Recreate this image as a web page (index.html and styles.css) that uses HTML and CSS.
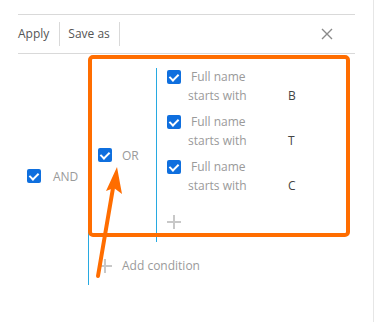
FILE: index.html
```html
<!DOCTYPE html>
<html lang="en">
<head>
  <meta charset="UTF-8">
  <meta name="viewport" content="width=device-width, initial-scale=1.0">
  <title>Filter</title>
  <link rel="stylesheet" href="styles.css">
</head>
<body>

  <div class="panel">
    <div class="toolbar">
      <span class="toolButton">Apply</span>
      <span class="toolButton">Save as</span>
      <span class="closeButton">
        <svg width="12" height="12" viewBox="0 0 12 12"><path d="M1 1 L11 11 M11 1 L1 11" stroke="#8a8a8a" stroke-width="1.4" fill="none"/></svg>
      </span>
    </div>

    <div class="tree">
      <div class="group">
        <span class="check"></span>
        <span class="groupLabel">AND</span>
      </div>

      <div class="branch">
        <div class="orGroup">
          <div class="group">
            <span class="check"></span>
            <span class="groupLabel">OR</span>
          </div>
          <div class="conditions">
            <div class="condition">
              <div class="conditionTop"><span class="check"></span><span class="field">Full name</span></div>
              <div class="conditionBottom"><span class="operator">starts with</span><span class="value">B</span></div>
            </div>
            <div class="condition">
              <div class="conditionTop"><span class="check"></span><span class="field">Full name</span></div>
              <div class="conditionBottom"><span class="operator">starts with</span><span class="value">T</span></div>
            </div>
            <div class="condition">
              <div class="conditionTop"><span class="check"></span><span class="field">Full name</span></div>
              <div class="conditionBottom"><span class="operator">starts with</span><span class="value">C</span></div>
            </div>
            <div class="plus"></div>
          </div>
        </div>

        <div class="addRow">
          <span class="plus"></span>
          <span class="addLabel">Add condition</span>
        </div>
      </div>
    </div>
  </div>

  <!-- annotation -->
  <div class="highlight"></div>
  <svg class="arrow" width="380" height="322" viewBox="0 0 380 322">
    <line x1="98" y1="276" x2="113" y2="188" stroke="#ff6d00" stroke-width="4" stroke-linecap="round"/>
    <polygon points="117,167 122,194 114,188 106,191" fill="#ff6d00"/>
  </svg>

</body>
</html>
```

FILE: styles.css
```css
body {
  margin: 0;
  font-family: "Open Sans", Arial, sans-serif;
  font-size: 12px;
  background: #fff;
  height: 322px;
  border-right: 1px solid #e6e6e6;
  width: 373px;
  position: relative;
  overflow: hidden;
}

.panel {
  margin-left: 18px;
  padding-top: 14px;
}

.toolbar {
  width: 337px;
  height: 38px;
  border-top: 1px solid #d9d9d9;
  border-bottom: 1px solid #d9d9d9;
  display: flex;
  align-items: center;
}

.toolButton {
  color: #555;
  font-size: 12px;
  line-height: 24px;
  padding-right: 10px;
  border-right: 1px solid #d9d9d9;
}

.toolButton + .toolButton {
  padding-left: 8px;
  padding-right: 9px;
}

.closeButton {
  margin-left: auto;
  margin-right: 22px;
  display: flex;
}

.tree {
  display: flex;
  align-items: center;
  margin-top: 13px;
  margin-left: 9px;
}

.group {
  display: flex;
  align-items: center;
}

.check {
  width: 14px;
  height: 14px;
  border-radius: 2px;
  background: #0f6fde;
  position: relative;
  flex-shrink: 0;
}

.check::after {
  content: "";
  position: absolute;
  left: 4px;
  top: 2px;
  width: 4px;
  height: 7px;
  border-right: 2px solid #fff;
  border-bottom: 2px solid #fff;
  transform: rotate(45deg);
}

.groupLabel {
  color: #9a9a9a;
  margin-left: 12px;
}

.tree > .group .groupLabel {
  width: 35px;
}

.branch {
  border-left: 1px solid #27a9e1;
  padding-left: 9px;
  padding-bottom: 12px;
}

.orGroup {
  display: flex;
  align-items: center;
  padding-top: 1px;
}

.orGroup .groupLabel {
  margin-left: 10px;
  width: 34px;
}

.conditions {
  border-left: 1px solid #27a9e1;
  padding-left: 10px;
  padding-bottom: 13px;
  width: 170px;
}

.condition {
  padding-top: 2px;
  margin-bottom: 8px;
}

.conditionTop {
  display: flex;
  align-items: center;
  height: 14px;
}

.field {
  color: #9a9a9a;
  margin-left: 10px;
  line-height: 14px;
}

.conditionBottom {
  margin-top: 2px;
  line-height: 19px;
  padding-left: 21px;
  display: flex;
}

.operator {
  color: #9a9a9a;
  width: 100px;
}

.value {
  color: #444;
}

.plus {
  width: 14px;
  height: 14px;
  position: relative;
  margin-top: 20px;
  flex-shrink: 0;
}

.plus::before, .plus::after {
  content: "";
  position: absolute;
  background: #c8c8c8;
}

.plus::before {
  left: 6px;
  top: 0;
  width: 1.5px;
  height: 14px;
}

.plus::after {
  top: 6px;
  left: 0;
  height: 1.5px;
  width: 14px;
}

.addRow {
  display: flex;
  align-items: center;
  margin-top: 17px;
}

.addRow .plus {
  margin-top: 0;
}

.addLabel {
  color: #9a9a9a;
  margin-left: 10px;
  line-height: 14px;
}

.highlight {
  position: absolute;
  left: 88px;
  top: 55px;
  width: 254px;
  height: 174px;
  border: 4px solid #ff6d00;
  border-radius: 5px;
}

.arrow {
  position: absolute;
  left: 0;
  top: 0;
}
```
